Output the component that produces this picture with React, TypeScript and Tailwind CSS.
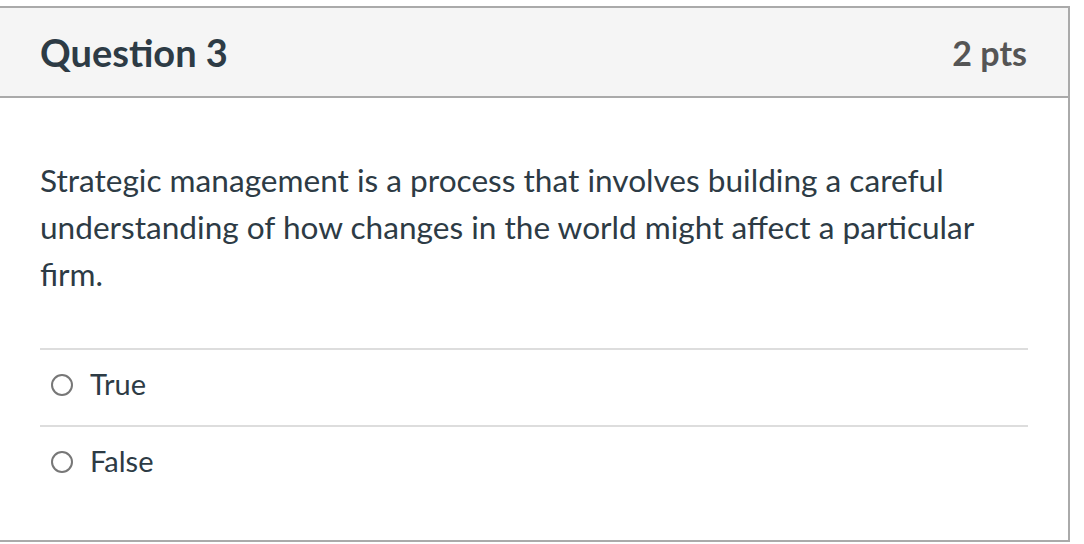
import React from "react";

const Radio = () => (
  <span className="block w-[22px] h-[22px] rounded-full border-2 border-[#777777] bg-white shrink-0 mb-[5px]" />
);

export default function App() {
  return (
    <div className="w-[1084px] h-[544px] bg-white pt-[6px] overflow-hidden" style={{ fontFamily: "Lato, 'Noto Sans', sans-serif" }}>
      <div className="ml-[-2px] w-[1072px] h-[536px] border-2 border-[#aaaaaa] flex flex-col">
        <div className="h-[90px] bg-[#f5f5f5] border-b-2 border-[#aaaaaa] flex items-center justify-between pl-[40px] pr-[41px] shrink-0">
          <h2 className="text-[38px] font-bold text-[#2d3b45]">Question 3</h2>
          <div className="text-[34px] font-bold text-[#555555]">2 pts</div>
        </div>
        <div className="px-[40px] pt-[59px]">
          <p className="text-[31.6px] leading-[47px] text-[#2d3b45]">
            Strategic management is a process that involves building a careful understanding of how changes in the world might affect a particular firm.
          </p>
          <div className="mt-[50px]">
            <div className="border-t-2 border-[#dddddd] h-[77px] flex items-center gap-[17px] pl-[11px]">
              <Radio />
              <span className="text-[29px] text-[#2d3b45] mb-[8px]">True</span>
            </div>
            <div className="border-t-2 border-[#dddddd] h-[77px] flex items-center gap-[17px] pl-[11px]">
              <Radio />
              <span className="text-[29px] text-[#2d3b45] mb-[8px]">False</span>
            </div>
          </div>
        </div>
      </div>
    </div>
  );
}
